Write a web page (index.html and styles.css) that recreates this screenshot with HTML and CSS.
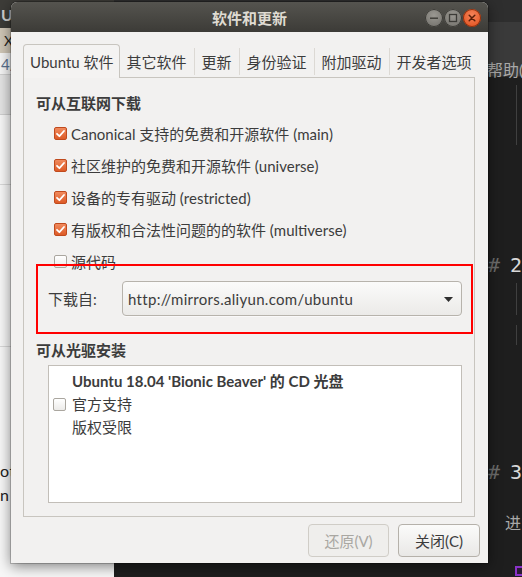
FILE: index.html
```html
<!DOCTYPE html>
<html lang="zh-CN">
<head>
<meta charset="utf-8">
<title>软件和更新</title>
<link rel="stylesheet" href="styles.css">
</head>
<body>
<div class="desktop">
  <div class="app-left">
    <div class="al-top">U</div>
    <div class="al-tabs">X</div>
    <div class="al-url">4/</div>
    <div class="al-bar"></div>
    <div class="al-page">
      <div class="al-rule"></div>
      <div class="al-rule al-rule2"></div>
      <div class="al-text">otl</div>
      <div class="al-text">n ,</div>
    </div>
  </div>

  <div class="app-right">
    <div class="ar-title"></div>
    <div class="ar-menu">帮助(</div>
    <div class="ar-editor">
      <div class="guide g1"></div>
      <div class="md-h h2"><span class="hash">#</span> 2</div>
      <div class="guide g2"></div>
      <div class="guide g3"></div>
      <div class="md-h h3"><span class="hash">#</span> 3</div>
      <div class="md-p">进</div>
      <div class="md-sq"></div>
    </div>
  </div>

  <div class="dialog">
    <div class="titlebar">
      <div class="tb-spacer"></div>
      <div class="tb-title">软件和更新</div>
      <div class="tb-buttons">
        <span class="wbtn wbtn-min"><svg width="18" height="18" viewBox="0 0 18 18"><rect x="5" y="8.5" width="8" height="1.4" fill="#3c3b37"/></svg></span>
        <span class="wbtn wbtn-max"><svg width="18" height="18" viewBox="0 0 18 18"><rect x="5.5" y="5.5" width="7" height="7" fill="none" stroke="#3c3b37" stroke-width="1.3"/></svg></span>
        <span class="wbtn wbtn-close"><svg width="18" height="18" viewBox="0 0 18 18"><path d="M6.2 6.2 L11.8 11.8 M11.8 6.2 L6.2 11.8" stroke="#5a1e08" stroke-width="1.5" stroke-linecap="round"/></svg></span>
      </div>
    </div>

    <div class="body">
      <div class="notebook">
        <div class="tabs">
          <div class="tab tab-active">Ubuntu 软件</div>
          <div class="tab">其它软件</div>
          <div class="tab">更新</div>
          <div class="tab">身份验证</div>
          <div class="tab">附加驱动</div>
          <div class="tab tab-last">开发者选项</div>
        </div>
        <div class="panel">
          <div class="section-title">可从互联网下载</div>
          <div class="checks">
            <label class="check-row"><span class="cb cb-on"><svg width="13" height="13" viewBox="0 0 13 13"><path d="M3 6.8 L5.4 9.2 L10 4" fill="none" stroke="#fff" stroke-width="1.8" stroke-linecap="round" stroke-linejoin="round"/></svg></span><span>Canonical 支持的免费和开源软件 (main)</span></label>
            <label class="check-row"><span class="cb cb-on"><svg width="13" height="13" viewBox="0 0 13 13"><path d="M3 6.8 L5.4 9.2 L10 4" fill="none" stroke="#fff" stroke-width="1.8" stroke-linecap="round" stroke-linejoin="round"/></svg></span><span>社区维护的免费和开源软件 (universe)</span></label>
            <label class="check-row"><span class="cb cb-on"><svg width="13" height="13" viewBox="0 0 13 13"><path d="M3 6.8 L5.4 9.2 L10 4" fill="none" stroke="#fff" stroke-width="1.8" stroke-linecap="round" stroke-linejoin="round"/></svg></span><span>设备的专有驱动 (restricted)</span></label>
            <label class="check-row"><span class="cb cb-on"><svg width="13" height="13" viewBox="0 0 13 13"><path d="M3 6.8 L5.4 9.2 L10 4" fill="none" stroke="#fff" stroke-width="1.8" stroke-linecap="round" stroke-linejoin="round"/></svg></span><span>有版权和合法性问题的的软件 (multiverse)</span></label>
            <label class="check-row"><span class="cb"></span><span>源代码</span></label>
          </div>
          <div class="source-row">
            <span class="source-label">下载自:</span>
            <div class="combo">
              <span class="combo-text">http://mirrors.aliyun.com/ubuntu</span>
              <svg class="combo-arrow" width="9" height="5" viewBox="0 0 9 5"><path d="M0 0 H9 L4.5 5 Z" fill="#2f2f2f"/></svg>
            </div>
          </div>
          <div class="section-title section-title2">可从光驱安装</div>
          <div class="cd-box">
            <div class="cd-item">
              <span class="cb cd-cb"></span>
              <div class="cd-lines">
                <div class="cd-name">Ubuntu 18.04 'Bionic Beaver' 的 CD 光盘</div>
                <div>官方支持</div>
                <div>版权受限</div>
              </div>
            </div>
          </div>
          <div class="annotation"></div>
        </div>
      </div>
      <div class="actions">
        <button class="btn btn-disabled" disabled>还原(V)</button>
        <button class="btn">关闭(C)</button>
      </div>
    </div>
  </div>
</div>
</body>
</html>
```

FILE: styles.css
```css
* { box-sizing: border-box; }
html, body { margin: 0; padding: 0; }
body {
  width: 522px;
  height: 577px;
  overflow: hidden;
  font-family: "Lato", "Noto Sans CJK SC", sans-serif;
  font-size: 15px;
  color: #3c3c3c;
}
.desktop {
  position: relative;
  width: 522px;
  height: 577px;
  overflow: hidden;
  background: #1e1e1e;
}

/* background app on the left */
.app-left {
  position: absolute;
  left: 0;
  top: 0;
  width: 114px;
  height: 577px;
  background: #f4f4f4;
  display: flex;
  flex-direction: column;
}
.al-top {
  height: 28px;
  background: #3d3c38;
  color: #cfcfcf;
  font-weight: bold;
  font-size: 16px;
  line-height: 30px;
  padding-left: 1px;
}
.al-tabs {
  height: 25px;
  background: #cfc6b6;
  color: #222;
  font-size: 14px;
  line-height: 25px;
  padding-left: 4px;
}
.al-url {
  height: 22px;
  background: #f5f5f5;
  color: #5b7290;
  font-size: 15px;
  line-height: 22px;
  padding-left: 1px;
  border-bottom: 1px solid #d0d0d0;
}
.al-bar {
  height: 40px;
  background: #e4e4e4;
  border-bottom: 1px solid #cfcfcf;
}
.al-page {
  flex: 1;
  background: #f7f7f7;
  display: flex;
  flex-direction: column;
}
.al-rule { height: 1px; background: #d8d8d8; margin-top: 69px; }
.al-rule2 { margin-top: 161px; }
.al-text {
  font-family: "Lato", sans-serif;
  font-size: 16px;
  color: #222;
  line-height: 24px;
  padding-left: 0;
  letter-spacing: 0.5px;
}
.al-rule2 + .al-text { margin-top: 112px; }

/* background editor on the right */
.app-right {
  position: absolute;
  left: 114px;
  top: 0;
  right: 0;
  bottom: 0;
  background: #1e1e1e;
  display: flex;
  flex-direction: column;
}
.ar-title { height: 22px; background: #2e2e2e; }
.ar-menu {
  height: 55px;
  background: #3a3a3a;
  color: #a9a9a9;
  font-size: 16px;
  line-height: 20px;
  padding-top: 38px;
  padding-left: 373px;
  white-space: nowrap;
  border-bottom: 1px solid #2a2a2a;
}
.ar-editor {
  flex: 1;
  padding-left: 373px;
  display: flex;
  flex-direction: column;
}
.guide { width: 1px; background: #404040; margin-left: 29px; }
.g1 { height: 60px; margin-top: 8px; }
.g2 { height: 32px; margin-top: 3px; }
.g3 { height: 20px; margin-top: 10px; }
.md-h {
  font-family: "DejaVu Sans Mono", monospace;
  font-size: 20px;
  line-height: 30px;
  letter-spacing: -1px;
  color: #d8d8d8;
  white-space: nowrap;
  padding-left: 1px;
}
.hash { color: #6d6d6d; }
.h2 { margin-top: 105px; }
.h3 { margin-top: 112px; }
.md-p {
  margin-top: 24px;
  padding-left: 18px;
  color: #a8a8a8;
  font-size: 16px;
  line-height: 24px;
}
.md-sq {
  margin-top: 31px;
  margin-left: 28px;
  width: 10px;
  height: 10px;
  border: 2px solid #8a32c8;
  background: #2a1a33;
}

/* dialog */
.dialog {
  position: absolute;
  left: 11px;
  top: 2px;
  width: 477px;
  height: 561px;
  display: flex;
  flex-direction: column;
  border-radius: 6px 6px 0 0;
  background: #f2f1f0;
  box-shadow: 0 0 0 1px rgba(0,0,0,0.2), 0 3px 14px rgba(0,0,0,0.5);
}
.titlebar {
  height: 30px;
  border-radius: 6px 6px 0 0;
  background: linear-gradient(#55544f, #3c3b37);
  display: grid;
  grid-template-columns: 1fr auto 1fr;
  align-items: center;
}
.tb-title {
  color: #dfdbd2;
  font-weight: bold;
  font-size: 15px;
  line-height: 30px;
  padding-top: 1px;
}
.tb-buttons {
  display: flex;
  justify-content: flex-end;
  gap: 1px;
  padding-right: 7px;
}
.wbtn {
  width: 18px;
  height: 18px;
  border-radius: 50%;
  display: block;
}
.wbtn svg { display: block; }
.wbtn-min, .wbtn-max {
  background: radial-gradient(circle at 50% 35%, #9a9892, #6e6c67);
  box-shadow: inset 0 0 0 1px #3a3935;
}
.wbtn-close {
  background: radial-gradient(circle at 50% 35%, #f4845a, #df4a16);
  box-shadow: inset 0 0 0 1px #8a2f0e;
}

.body {
  flex: 1;
  display: flex;
  flex-direction: column;
  padding: 12px 0 0 12px;
}
.notebook {
  flex: 1;
  display: flex;
  flex-direction: column;
  margin-right: 13px;
}
.tabs {
  height: 33px;
  display: flex;
  align-items: stretch;
}
.tab {
  padding: 1px 7px 0;
  white-space: nowrap;
  color: #3c3c3c;
  position: relative;
  border-right: 1px solid #dcd9d4;
  margin: 4px 0 2px;
  line-height: 27px;
}
.tab-last { border-right: none; }
.tab-active {
  margin: 0 0 -1px;
  padding: 0 5px 0 6px;
  line-height: 34px;
  background: #f4f3f2;
  border: 1px solid #c8c5bf;
  border-bottom: none;
  border-radius: 4px 4px 0 0;
  z-index: 1;
}
.panel {
  flex: 1;
  position: relative;
  border: 1px solid #c8c5bf;
  background: #f2f1f0;
  padding: 15px 12px 13px 12px;
  display: flex;
  flex-direction: column;
}
.section-title {
  font-weight: bold;
  line-height: 20px;
  color: #3c3c3c;
}
.section-title2 { margin-top: 24px; }
.checks {
  margin-top: 4px;
  margin-left: 18px;
  display: flex;
  flex-direction: column;
}
.check-row {
  height: 32px;
  display: flex;
  align-items: center;
  gap: 4px;
  white-space: nowrap;
}
.cb {
  width: 13px;
  height: 13px;
  flex: none;
  border-radius: 2px;
  border: 1px solid #aaa69f;
  background: linear-gradient(#ffffff, #ecebe9);
  display: block;
}
.cb svg { display: block; margin: -1px; }
.cb-on {
  border-color: #c04a1d;
  background: linear-gradient(#f08a5d, #dd5a26);
}
.source-row {
  margin-top: 4px;
  margin-left: 12px;
  height: 35px;
  display: flex;
  align-items: center;
}
.source-label {
  width: 74px;
  flex: none;
}
.combo {
  flex: 1;
  height: 35px;
  border: 1px solid #b7b3ac;
  border-radius: 4px;
  background: linear-gradient(#fbfbfa, #ebeae8);
  box-shadow: 0 1px 0 rgba(255,255,255,0.6);
  display: flex;
  align-items: center;
  justify-content: space-between;
  padding: 0 8px 0 5px;
}
.combo-text { white-space: nowrap; letter-spacing: 0.3px; }
.combo-arrow { display: block; margin-top: 1px; }
.cd-box {
  flex: 1;
  margin-top: 5px;
  margin-left: 12px;
  background: #ffffff;
  border: 1px solid #c2beb8;
  padding: 4px 0 0 4px;
}
.cd-item {
  display: flex;
  align-items: center;
  gap: 6px;
}
.cd-lines { line-height: 23px; }
.cd-name { font-weight: bold; white-space: nowrap; }
.annotation {
  position: absolute;
  left: 12px;
  top: 186px;
  width: 437px;
  height: 70px;
  border: 2px solid #ff0000;
  pointer-events: none;
}
.actions {
  height: 46px;
  padding: 7px 8px 6px 0;
  display: flex;
  justify-content: flex-end;
  gap: 9px;
}
.btn {
  height: 33px;
  width: 82px;
  font-family: "Lato", "Noto Sans CJK SC", sans-serif;
  font-size: 15px;
  color: #3c3c3c;
  border: 1px solid #b5b1aa;
  border-radius: 4px;
  background: linear-gradient(#fbfbfa, #e9e8e6);
  padding: 0;
}
.btn-disabled {
  width: 81px;
  color: #a9a7a2;
  border-color: #d0cdc7;
  background: #efeeec;
}
```
